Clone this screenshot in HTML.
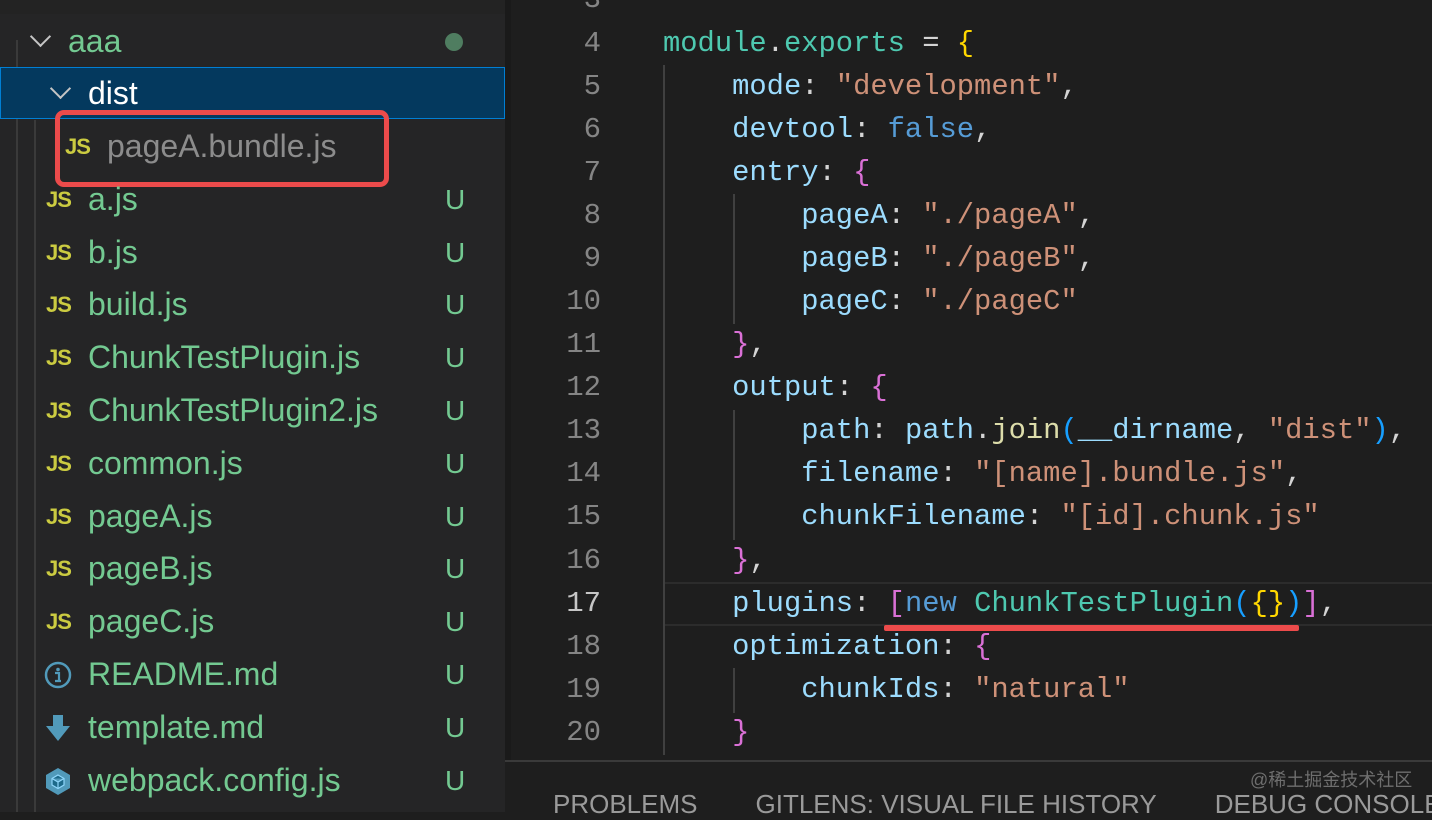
<!DOCTYPE html>
<html><head><meta charset="utf-8"><style>
*{margin:0;padding:0;box-sizing:border-box}
body{width:1432px;height:812px;overflow:hidden;background:#1e1e1e;position:relative;font-family:"Liberation Sans",sans-serif}
#side{position:absolute;left:0;top:0;width:505px;height:812px;background:#252526}
#side .g{position:absolute;width:2px;background:#3a3a3a}
.row{position:absolute;left:0;width:505px;height:53px;line-height:53px;font-size:32px;color:#73c991}
.row .t{position:absolute}
.row .u{position:absolute;left:445px;color:#73c991;font-size:28px}
.js{position:absolute;font-weight:bold;color:#cbcb41;font-size:22px;letter-spacing:-1px}
.chev{position:absolute;width:15px;height:15px;border-right:2px solid #c5c5c5;border-bottom:2px solid #c5c5c5;transform:rotate(45deg)}
.ln{position:absolute;left:505px;width:96px;text-align:right;font-family:"Liberation Mono",monospace;font-size:29px;color:#858585;height:43px;line-height:43px}
.cl{position:absolute;left:663px;font-family:"Liberation Mono",monospace;font-size:28.8px;white-space:pre;height:43px;line-height:43px;color:#d4d4d4}
.k{color:#9cdcfe}.s{color:#ce9178}.b{color:#569cd6}.p{color:#da70d6}.y{color:#ffd700}.m{color:#4ec9b0}.f{color:#dcdcaa}.bl{color:#179fff}
.ig{position:absolute;width:2px;background:#404040}
</style></head><body>
<div id="side">
<div class="g" style="left:16px;top:40px;height:772px"></div>
<div class="g" style="left:34px;top:120px;height:692px"></div>
<div style="position:absolute;left:0;top:0;width:505px;height:14px;background:#232323"></div>
<div class="row" style="top:15px"><div class="chev" style="left:33px;top:14px"></div><span class="t" style="left:68px">aaa</span><div style="position:absolute;left:445px;top:18px;width:18px;height:18px;border-radius:50%;background:#4f7d60"></div></div>
<div class="row" style="top:67px;height:52px;background:#04395e;border:1px solid #007fd4;color:#fff"><div class="chev" style="left:52px;top:13px"></div><span class="t" style="left:87px;top:-1px">dist</span></div>
<div class="row" style="top:120px;color:#8c8c8c"><span class="js" style="left:65px">JS</span><span class="t" style="left:107px">pageA.bundle.js</span></div>
<div style="position:absolute;left:55px;top:110px;width:334px;height:77px;border:5px solid #ec4b4b;border-radius:9px"></div>
<div class="row" style="top:173px"><span class="js" style="left:46px">JS</span><span class="t" style="left:88px">a.js</span><span class="u">U</span></div>
<div class="row" style="top:226px"><span class="js" style="left:46px">JS</span><span class="t" style="left:88px">b.js</span><span class="u">U</span></div>
<div class="row" style="top:278px"><span class="js" style="left:46px">JS</span><span class="t" style="left:88px">build.js</span><span class="u">U</span></div>
<div class="row" style="top:331px"><span class="js" style="left:46px">JS</span><span class="t" style="left:88px">ChunkTestPlugin.js</span><span class="u">U</span></div>
<div class="row" style="top:384px"><span class="js" style="left:46px">JS</span><span class="t" style="left:88px">ChunkTestPlugin2.js</span><span class="u">U</span></div>
<div class="row" style="top:437px"><span class="js" style="left:46px">JS</span><span class="t" style="left:88px">common.js</span><span class="u">U</span></div>
<div class="row" style="top:490px"><span class="js" style="left:46px">JS</span><span class="t" style="left:88px">pageA.js</span><span class="u">U</span></div>
<div class="row" style="top:542px"><span class="js" style="left:46px">JS</span><span class="t" style="left:88px">pageB.js</span><span class="u">U</span></div>
<div class="row" style="top:595px"><span class="js" style="left:46px">JS</span><span class="t" style="left:88px">pageC.js</span><span class="u">U</span></div>
<div class="row" style="top:648px"><svg style="position:absolute;left:44px;top:13px" width="28" height="28" viewBox="0 0 28 28"><circle cx="14" cy="14" r="12" fill="none" stroke="#519aba" stroke-width="2.5"/><circle cx="14" cy="8.5" r="1.8" fill="#519aba"/><path d="M11 12h4v8h2M11 20h6" stroke="#519aba" stroke-width="2.2" fill="none"/></svg><span class="t" style="left:88px">README.md</span><span class="u">U</span></div>
<div class="row" style="top:701px"><svg style="position:absolute;left:44px;top:12px" width="28" height="30" viewBox="0 0 28 30"><path d="M9 2h10v11h7L14 28 2 13h7z" fill="#519aba"/></svg><span class="t" style="left:88px">template.md</span><span class="u">U</span></div>
<div class="row" style="top:754px"><svg style="position:absolute;left:44px;top:12px" width="28" height="30" viewBox="0 0 28 30"><path d="M14 2 26 9v13l-12 7-12-7V9z" fill="#519aba"/><path d="M14 9 20 12.5v6.5L14 22.5 8 19v-6.5z M8 12.5 14 16 20 12.5 M14 16v6.5" fill="#1d6a8a" stroke="#8ed6fb" stroke-width="1.2"/></svg><span class="t" style="left:88px">webpack.config.js</span><span class="u">U</span></div>
</div>
<div style="position:absolute;left:505px;top:0;width:6px;height:812px;background:#1a1a1a"></div>

<div style="position:absolute;left:663px;top:582px;width:769px;height:44px;border-top:2px solid #2c2c2c;border-bottom:2px solid #2c2c2c"></div>
<div class="ig" style="left:663px;top:65px;height:690px"></div>
<div class="ig" style="left:733px;top:194px;height:130px"></div>
<div class="ig" style="left:733px;top:410px;height:130px"></div>
<div class="ig" style="left:733px;top:668px;height:45px"></div>

<div class="ln" style="top:-22px">3</div>
<div class="ln" style="top:22px">4</div>
<div class="ln" style="top:65px">5</div>
<div class="ln" style="top:108px">6</div>
<div class="ln" style="top:151px">7</div>
<div class="ln" style="top:194px">8</div>
<div class="ln" style="top:237px">9</div>
<div class="ln" style="top:280px">10</div>
<div class="ln" style="top:323px">11</div>
<div class="ln" style="top:366px">12</div>
<div class="ln" style="top:409px">13</div>
<div class="ln" style="top:452px">14</div>
<div class="ln" style="top:495px">15</div>
<div class="ln" style="top:539px">16</div>
<div class="ln" style="top:582px;color:#c6c6c6">17</div>
<div class="ln" style="top:625px">18</div>
<div class="ln" style="top:668px">19</div>
<div class="ln" style="top:711px">20</div>

<div class="cl" style="top:22px"><span class="m">module</span>.<span class="m">exports</span> = <span class="y">{</span></div>
<div class="cl" style="top:65px">    <span class="k">mode</span>: <span class="s">"development"</span>,</div>
<div class="cl" style="top:108px">    <span class="k">devtool</span>: <span class="b">false</span>,</div>
<div class="cl" style="top:151px">    <span class="k">entry</span>: <span class="p">{</span></div>
<div class="cl" style="top:194px">        <span class="k">pageA</span>: <span class="s">"./pageA"</span>,</div>
<div class="cl" style="top:237px">        <span class="k">pageB</span>: <span class="s">"./pageB"</span>,</div>
<div class="cl" style="top:280px">        <span class="k">pageC</span>: <span class="s">"./pageC"</span></div>
<div class="cl" style="top:323px">    <span class="p">}</span>,</div>
<div class="cl" style="top:366px">    <span class="k">output</span>: <span class="p">{</span></div>
<div class="cl" style="top:409px">        <span class="k">path</span>: <span class="k">path</span>.<span class="f">join</span><span class="bl">(</span><span class="k">__dirname</span>, <span class="s">"dist"</span><span class="bl">)</span>,</div>
<div class="cl" style="top:452px">        <span class="k">filename</span>: <span class="s">"[name].bundle.js"</span>,</div>
<div class="cl" style="top:495px">        <span class="k">chunkFilename</span>: <span class="s">"[id].chunk.js"</span></div>
<div class="cl" style="top:539px">    <span class="p">}</span>,</div>
<div class="cl" style="top:582px">    <span class="k">plugins</span>: <span class="p">[</span><span class="b">new</span> <span class="m">ChunkTestPlugin</span><span class="bl">(</span><span class="y">{}</span><span class="bl">)</span><span class="p">]</span>,</div>
<div class="cl" style="top:625px">    <span class="k">optimization</span>: <span class="p">{</span></div>
<div class="cl" style="top:668px">        <span class="k">chunkIds</span>: <span class="s">"natural"</span></div>
<div class="cl" style="top:711px">    <span class="p">}</span></div>
<div style="position:absolute;left:884px;top:625px;width:415px;height:6px;background:#ec4b4b;border-radius:2px"></div>

<div style="position:absolute;left:505px;top:760px;width:927px;height:52px;background:#1e1e1e;border-top:2px solid #3a3a3a"></div>
<div style="position:absolute;left:1250px;top:766px;font-size:18px;color:#6e6e6e;font-family:'Liberation Sans','Noto Sans CJK SC',sans-serif">@稀土掘金技术社区</div>
<div style="position:absolute;left:553px;top:789px;font-size:26px;color:#9a9a9a;white-space:nowrap">PROBLEMS<span style="margin-left:58px">GITLENS: VISUAL FILE HISTORY</span><span style="margin-left:58px">DEBUG CONSOLE</span></div>
</body></html>
